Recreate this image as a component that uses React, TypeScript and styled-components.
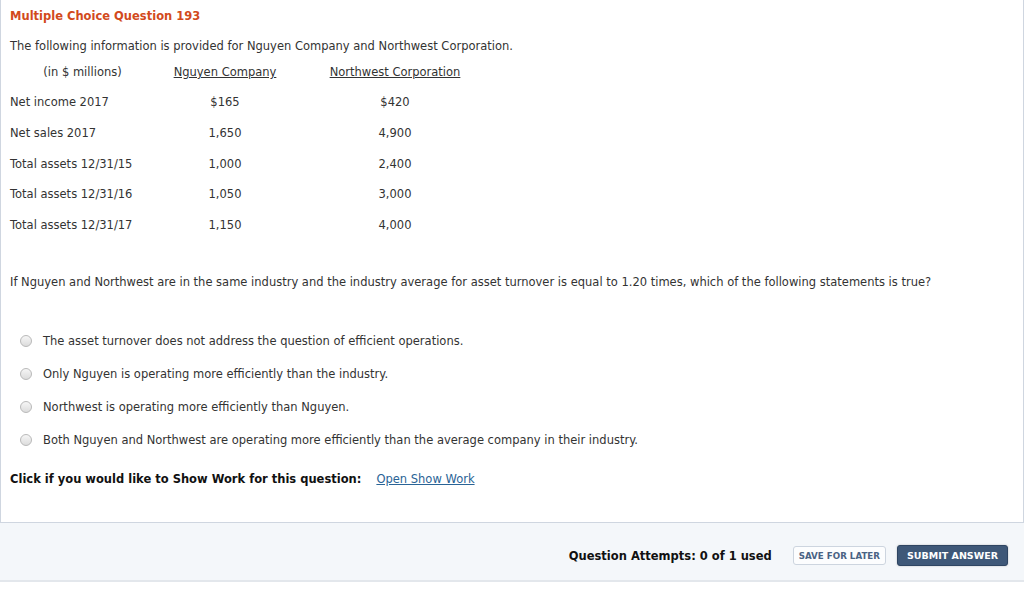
import * as React from "react";
import styled, { createGlobalStyle } from "styled-components";

const GlobalStyle = createGlobalStyle`
  html, body {
    margin: 0;
    padding: 0;
    background: #ffffff;
  }
  body {
    font-family: "DejaVu Sans", Verdana, sans-serif;
    font-size: 11.5px;
    color: #333333;
  }
`;

const rows = [
  { label: "Net income 2017", nguyen: "$165", northwest: "$420" },
  { label: "Net sales 2017", nguyen: "1,650", northwest: "4,900" },
  { label: "Total assets 12/31/15", nguyen: "1,000", northwest: "2,400" },
  { label: "Total assets 12/31/16", nguyen: "1,050", northwest: "3,000" },
  { label: "Total assets 12/31/17", nguyen: "1,150", northwest: "4,000" },
];

const options = [
  "The asset turnover does not address the question of efficient operations.",
  "Only Nguyen is operating more efficiently than the industry.",
  "Northwest is operating more efficiently than Nguyen.",
  "Both Nguyen and Northwest are operating more efficiently than the average company in their industry.",
];

export default function App() {
  const [selected, setSelected] = React.useState<number | null>(null);

  return (
    <>
      <GlobalStyle />
      <Page>
        <Card>
          <Title>Multiple Choice Question 193</Title>
          <Intro>
            The following information is provided for Nguyen Company and Northwest Corporation.
          </Intro>
          <DataTable>
            <thead>
              <tr>
                <HeadCell>(in $ millions)</HeadCell>
                <HeadCell underline>Nguyen Company</HeadCell>
                <HeadCell underline>Northwest Corporation</HeadCell>
              </tr>
            </thead>
            <tbody>
              {rows.map((r) => (
                <tr key={r.label}>
                  <LabelCell>{r.label}</LabelCell>
                  <ValueCell>{r.nguyen}</ValueCell>
                  <ValueCell>{r.northwest}</ValueCell>
                </tr>
              ))}
            </tbody>
          </DataTable>
          <Question>
            If Nguyen and Northwest are in the same industry and the industry average for asset
            turnover is equal to 1.20 times, which of the following statements is true?
          </Question>
          <OptionList>
            {options.map((text, i) => (
              <OptionRow key={i} onClick={() => setSelected(i)}>
                <Radio checked={selected === i} />
                <span>{text}</span>
              </OptionRow>
            ))}
          </OptionList>
          <ShowWork>
            <strong>Click if you would like to Show Work for this question:</strong>
            <WorkLink href="#">Open Show Work</WorkLink>
          </ShowWork>
        </Card>
        <Footer>
          <Attempts>Question Attempts: 0 of 1 used</Attempts>
          <SaveButton>SAVE FOR LATER</SaveButton>
          <SubmitButton>SUBMIT ANSWER</SubmitButton>
        </Footer>
      </Page>
    </>
  );
}

const Page = styled.div`
  width: 1024px;
  display: flex;
  flex-direction: column;
`;

const Card = styled.div`
  border: 1px solid #cfd6e0;
  border-top: none;
  padding: 8px 9px 35px;
  background: #ffffff;
`;

const Title = styled.div`
  color: #d24a1c;
  font-weight: bold;
  line-height: 16px;
`;

const Intro = styled.p`
  margin: 14px 0 0;
  line-height: 16px;
`;

const DataTable = styled.table`
  border-collapse: collapse;
  margin-top: 3px;
  font-size: 11.5px;
`;

const HeadCell = styled.th<{ underline?: boolean }>`
  font-weight: normal;
  text-align: center;
  padding: 0;
  height: 30px;
  vertical-align: middle;
  text-decoration: ${({ underline }) => (underline ? "underline" : "none")};
  &:nth-child(1) {
    width: 145px;
  }
  &:nth-child(2) {
    width: 140px;
  }
  &:nth-child(3) {
    width: 200px;
  }
`;

const LabelCell = styled.td`
  padding: 0;
  height: 30.7px;
  text-align: left;
  vertical-align: middle;
`;

const ValueCell = styled.td`
  padding: 0;
  text-align: center;
  vertical-align: middle;
`;

const Question = styled.p`
  margin: 34px 0 0;
  line-height: 16px;
`;

const OptionList = styled.div`
  display: flex;
  flex-direction: column;
  gap: 17px;
  margin-top: 43px;
  padding-left: 10px;
`;

const OptionRow = styled.label`
  display: flex;
  align-items: center;
  gap: 11px;
  line-height: 16px;
  cursor: pointer;
`;

const Radio = styled.span<{ checked: boolean }>`
  width: 12px;
  height: 12px;
  border-radius: 50%;
  box-sizing: border-box;
  border: 1px solid #b9b9b9;
  background: ${({ checked }) =>
    checked
      ? "radial-gradient(circle, #444 0 2.5px, #f3f3f3 3px)"
      : "linear-gradient(#f6f6f6, #dcdcdc)"};
  flex-shrink: 0;
`;

const ShowWork = styled.div`
  margin-top: 23px;
  display: flex;
  gap: 15px;
  line-height: 16px;
  color: #111111;
`;

const WorkLink = styled.a`
  color: #2a6496;
  text-decoration: underline;
`;

const Footer = styled.div`
  display: flex;
  align-items: center;
  justify-content: flex-end;
  box-sizing: border-box;
  height: 59px;
  padding: 8px 16px 0 0;
  background: #f4f7fa;
  border-bottom: 2px solid #e3e7ec;
`;

const Attempts = styled.div`
  font-weight: bold;
  color: #111111;
  margin-right: 21px;
`;

const SaveButton = styled.button`
  font-family: "DejaVu Sans", Verdana, sans-serif;
  font-size: 8.7px;
  font-weight: bold;
  color: #4a6384;
  background: #fcfdfe;
  border: 1px solid #cdd5df;
  border-radius: 3px;
  height: 19px;
  padding: 0 5px;
  margin-right: 11px;
`;

const SubmitButton = styled.button`
  font-family: "DejaVu Sans", Verdana, sans-serif;
  font-size: 9.5px;
  font-weight: bold;
  color: #ffffff;
  background: #3e5878;
  border: 1px solid #2e4562;
  border-radius: 3px;
  height: 21px;
  padding: 0 9px;
  box-shadow: 0 0 2px rgba(0, 0, 0, 0.25);
`;
